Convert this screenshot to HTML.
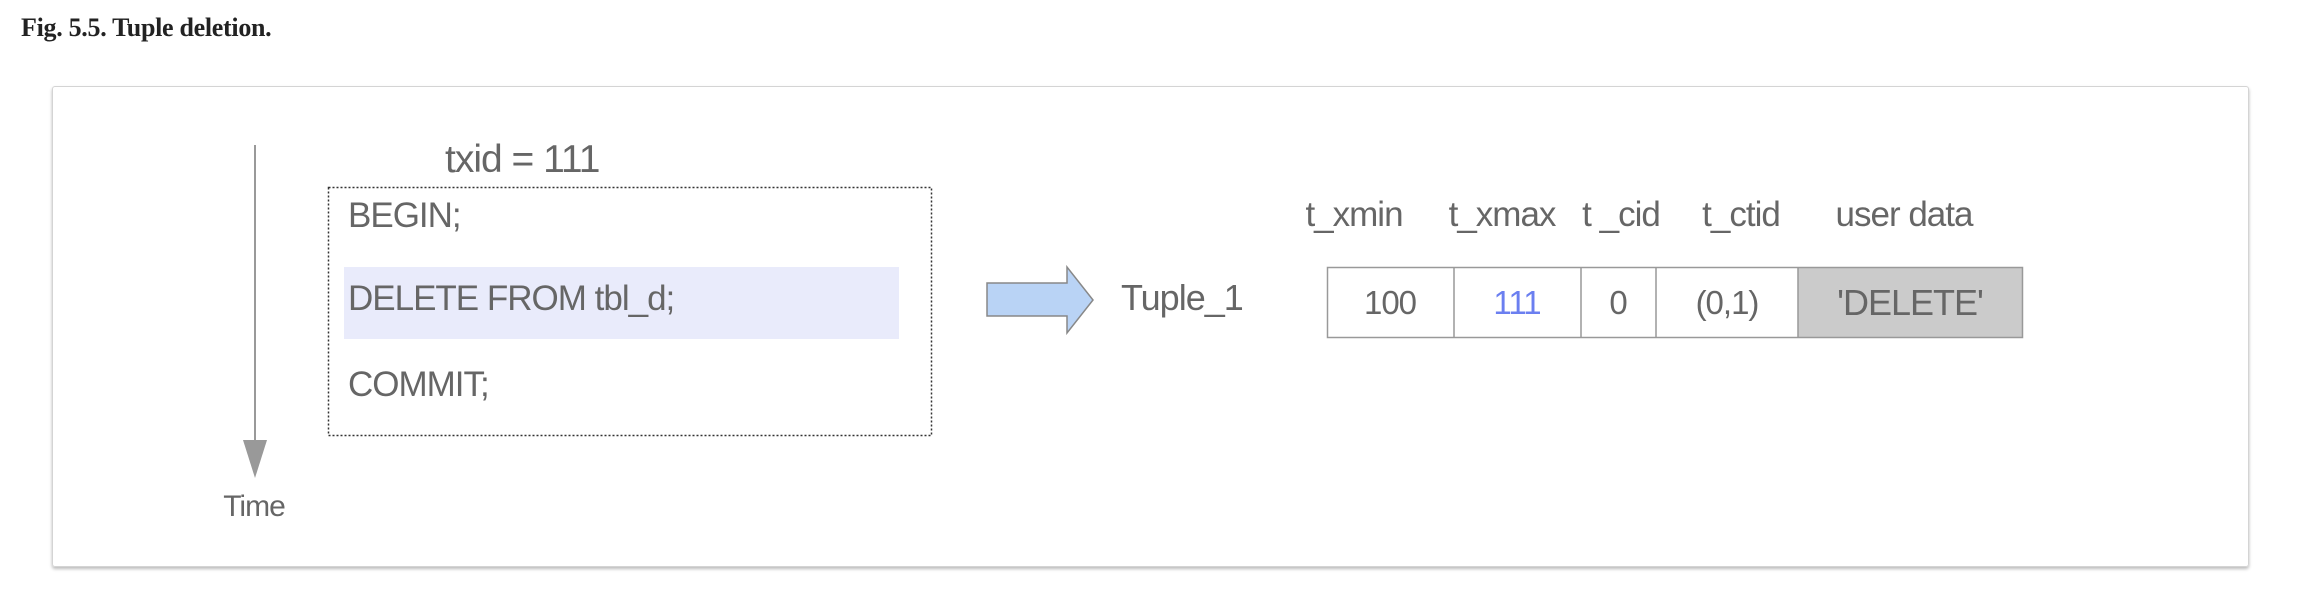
<!DOCTYPE html>
<html><head><style>
body{margin:0;width:2324px;height:604px;background:#fff;position:relative;overflow:hidden;font-family:"Liberation Sans",sans-serif;color:#666}
.a{position:absolute;white-space:nowrap}
.t{font-size:35px;letter-spacing:-1px;transform:translateY(-50%)}
.c{transform:translate(-50%,-50%);font-size:35px;letter-spacing:-1px}
</style></head><body>
<div class="a" style="left:21px;top:13px;font:bold 26px 'Liberation Serif',serif;color:#222;letter-spacing:-0.3px">Fig. 5.5. Tuple deletion.</div>
<div class="a" style="left:52px;top:86px;width:2195px;height:479px;border:1px solid #d4d4d4;border-radius:3px;box-shadow:0 2px 3px #bbb"></div>
<svg class="a" style="left:0;top:0" width="2324" height="604">
<line x1="255" y1="145" x2="255" y2="445" stroke="#999" stroke-width="2"/>
<polygon points="243,440 267,440 255,478" fill="#999"/>
<rect x="328.5" y="187.5" width="603" height="248" fill="none" stroke="#333" stroke-width="1.5" stroke-dasharray="2,2"/>
<rect x="344" y="267" width="555" height="72" fill="#e9ebfb"/>
<polygon points="987,283 1067,283 1067,267 1093,300 1067,333 1067,316 987,316" fill="#b9d3f5" stroke="#888" stroke-width="1.5"/>
<rect x="1798" y="267" width="225" height="71" fill="#cbcbcb"/>
<rect x="1327.5" y="267.5" width="695" height="70" fill="none" stroke="#999" stroke-width="1.5"/>
<g stroke="#999" stroke-width="1.5"><line x1="1454" y1="267" x2="1454" y2="338"/><line x1="1581" y1="267" x2="1581" y2="338"/><line x1="1656" y1="267" x2="1656" y2="338"/><line x1="1798" y1="267" x2="1798" y2="338"/></g>
</svg>
<div class="a c" style="left:254px;top:507px;font-size:30px">Time</div>
<div class="a t" style="left:445px;top:160px;font-size:39px">txid = 111</div>
<div class="a t" style="left:348px;top:216px">BEGIN;</div>
<div class="a t" style="left:348px;top:299px">DELETE FROM tbl_d;</div>
<div class="a t" style="left:348px;top:385px">COMMIT;</div>
<div class="a t" style="left:1121px;top:298px;font-size:36px">Tuple_1</div>
<div class="a c" style="left:1354px;top:215px">t_xmin</div>
<div class="a c" style="left:1502px;top:215px">t_xmax</div>
<div class="a c" style="left:1621px;top:215px">t _cid</div>
<div class="a c" style="left:1741px;top:215px">t_ctid</div>
<div class="a c" style="left:1904px;top:215px">user data</div>
<div class="a c" style="left:1390px;top:303px;font-size:33px">100</div>
<div class="a c" style="left:1517px;top:303px;font-size:33px;color:#6b7ff0">111</div>
<div class="a c" style="left:1618px;top:303px;font-size:33px">0</div>
<div class="a c" style="left:1727px;top:303px;font-size:33px">(0,1)</div>
<div class="a c" style="left:1910px;top:303px;font-size:36px">'DELETE'</div>
</body></html>
